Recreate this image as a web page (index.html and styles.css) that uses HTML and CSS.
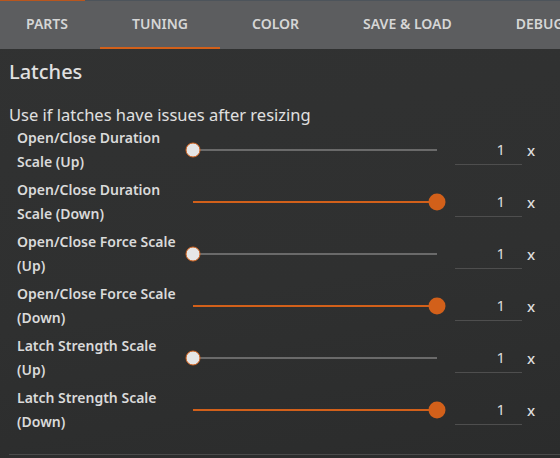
FILE: index.html
```html
<!DOCTYPE html>
<html lang="en">
  <head>
    <meta charset="UTF-8" />
    <meta name="viewport" content="width=device-width, initial-scale=1.0" />
    <title>Tuning</title>
    <link rel="stylesheet" href="styles.css">
  </head>
  <body>
    <div class="topline"><div class="topline-fill"></div></div>

    <nav class="tabs">
      <div class="tab">PARTS</div>
      <div class="tab active">TUNING</div>
      <div class="tab">COLOR</div>
      <div class="tab">SAVE &amp; LOAD</div>
      <div class="tab">DEBUG</div>
    </nav>

    <main class="panel">
      <h2 class="title">Latches</h2>
      <p class="note">Use if latches have issues after resizing</p>

      <div class="row">
        <div class="label">Open/Close Duration Scale (Up)</div>
        <div class="slider at-min"><div class="track"><div class="fill" style="width: 0%"></div></div><div class="thumb" style="left: 0%"></div></div>
        <div class="value">1</div>
        <div class="unit">x</div>
      </div>

      <div class="row">
        <div class="label">Open/Close Duration Scale (Down)</div>
        <div class="slider at-max"><div class="track"><div class="fill" style="width: 100%"></div></div><div class="thumb" style="left: 100%"></div></div>
        <div class="value">1</div>
        <div class="unit">x</div>
      </div>

      <div class="row">
        <div class="label">Open/Close Force Scale (Up)</div>
        <div class="slider at-min"><div class="track"><div class="fill" style="width: 0%"></div></div><div class="thumb" style="left: 0%"></div></div>
        <div class="value">1</div>
        <div class="unit">x</div>
      </div>

      <div class="row">
        <div class="label">Open/Close Force Scale (Down)</div>
        <div class="slider at-max"><div class="track"><div class="fill" style="width: 100%"></div></div><div class="thumb" style="left: 100%"></div></div>
        <div class="value">1</div>
        <div class="unit">x</div>
      </div>

      <div class="row">
        <div class="label">Latch Strength Scale (Up)</div>
        <div class="slider at-min"><div class="track"><div class="fill" style="width: 0%"></div></div><div class="thumb" style="left: 0%"></div></div>
        <div class="value">1</div>
        <div class="unit">x</div>
      </div>

      <div class="row">
        <div class="label">Latch Strength Scale (Down)</div>
        <div class="slider at-max"><div class="track"><div class="fill" style="width: 100%"></div></div><div class="thumb" style="left: 100%"></div></div>
        <div class="value">1</div>
        <div class="unit">x</div>
      </div>

      <div class="divider"></div>
    </main>
  </body>
</html>
```

FILE: styles.css
```css
* {
  box-sizing: border-box;
}
body {
  margin: 0;
  height: 458px;
  overflow: hidden;
  background: linear-gradient(170deg, #313232 0%, #2f3030 60%, #2b2c2c 100%);
  color: #dcdcdc;
  font-family: "Noto Sans", "Open Sans", sans-serif;
}
.topline {
  height: 1px;
  background-color: #4d545b;
}
.topline-fill {
  width: 85px;
  height: 1px;
  background-color: #b9561e;
}
.tabs {
  display: flex;
  height: 48px;
  background-color: #5c5d5f;
  margin-left: -6px;
  white-space: nowrap;
}
.tab {
  flex-shrink: 0;
  padding: 0 32px;
  line-height: 46px;
  font-size: 14px;
  font-weight: 600;
  color: #d6d6d6;
  border-bottom: 2px solid transparent;
}
.tab.active {
  border-bottom-color: #d2601a;
}
.panel {
  padding: 0 0 0 9px;
}
.title {
  margin: 0;
  padding-top: 10px;
  font-size: 20px;
  font-weight: 500;
  line-height: 26px;
  color: #e0e0e0;
}
.note {
  margin: 0 0 -2px;
  padding-top: 19px;
  font-size: 16.5px;
  line-height: 22px;
  color: #e0e0e0;
}
.row {
  display: flex;
  align-items: center;
  height: 52px;
  padding-left: 8px;
}
.label {
  width: 168px;
  flex-shrink: 0;
  font-size: 14px;
  font-weight: 600;
  line-height: 24px;
  color: #dadada;
}
.slider {
  position: relative;
  width: 244px;
  height: 20px;
  margin-left: 8px;
  display: flex;
  align-items: center;
}
.track {
  width: 100%;
  height: 2px;
  background-color: #6a6a6a;
}
.fill {
  height: 2px;
  background-color: #d2601a;
}
.thumb {
  position: absolute;
  top: 50%;
  width: 15px;
  height: 15px;
  border-radius: 50%;
  transform: translate(-50%, -50%);
  background-color: #e6e6e6;
  border: 1.5px solid #d2601a;
}
.at-max .thumb {
  width: 17px;
  height: 17px;
  background-color: #d2601a;
  border: none;
}
.value {
  width: 67px;
  height: 30px;
  margin-left: 18px;
  padding-right: 17px;
  text-align: right;
  font-size: 15px;
  line-height: 29px;
  color: #dcdcdc;
  border-bottom: 1px solid #4e4e4e;
}
.unit {
  margin-left: 5px;
  font-size: 15px;
  font-weight: 500;
  color: #dcdcdc;
}
.divider {
  height: 1px;
  margin-top: 18px;
  background-color: #4a4a4a;
}
```
